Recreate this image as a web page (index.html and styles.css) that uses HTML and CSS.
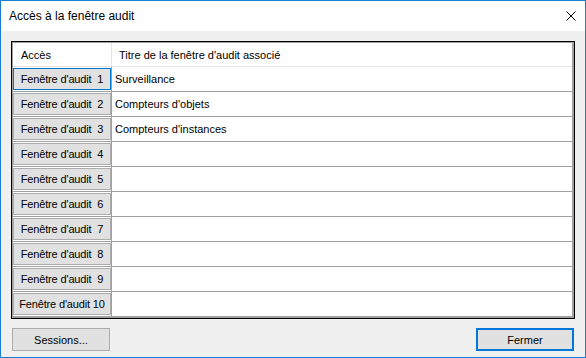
FILE: index.html
```html
<!DOCTYPE html>
<html>
<head>
	<title>Accès à la fenêtre audit</title>
	<link rel="stylesheet" href="styles.css">
</head>
<body>
	<div class="window">
		<div class="titlebar">
			<span class="title">Accès à la fenêtre audit</span>
			<svg class="close" width="10" height="10" viewBox="0 0 10 10">
				<path d="M0.5 0.5 L9.5 9.5 M9.5 0.5 L0.5 9.5" stroke="#000" stroke-width="1" fill="none"/>
			</svg>
		</div>
		<div class="content">
			<div class="grid">
				<div class="grid-inner">
					<div class="row header">
						<div class="col-access">Accès</div>
						<div class="col-title">Titre de la fenêtre d'audit associé</div>
					</div>
					<div class="row">
						<div class="col-access"><button class="cell-btn focused">Fenêtre d'audit&nbsp;&nbsp;1</button></div>
						<div class="col-title">Surveillance</div>
					</div>
					<div class="row">
						<div class="col-access"><button class="cell-btn">Fenêtre d'audit&nbsp;&nbsp;2</button></div>
						<div class="col-title">Compteurs d'objets</div>
					</div>
					<div class="row">
						<div class="col-access"><button class="cell-btn">Fenêtre d'audit&nbsp;&nbsp;3</button></div>
						<div class="col-title">Compteurs d'instances</div>
					</div>
					<div class="row">
						<div class="col-access"><button class="cell-btn">Fenêtre d'audit&nbsp;&nbsp;4</button></div>
						<div class="col-title"></div>
					</div>
					<div class="row">
						<div class="col-access"><button class="cell-btn">Fenêtre d'audit&nbsp;&nbsp;5</button></div>
						<div class="col-title"></div>
					</div>
					<div class="row">
						<div class="col-access"><button class="cell-btn">Fenêtre d'audit&nbsp;&nbsp;6</button></div>
						<div class="col-title"></div>
					</div>
					<div class="row">
						<div class="col-access"><button class="cell-btn">Fenêtre d'audit&nbsp;&nbsp;7</button></div>
						<div class="col-title"></div>
					</div>
					<div class="row">
						<div class="col-access"><button class="cell-btn">Fenêtre d'audit&nbsp;&nbsp;8</button></div>
						<div class="col-title"></div>
					</div>
					<div class="row">
						<div class="col-access"><button class="cell-btn">Fenêtre d'audit&nbsp;&nbsp;9</button></div>
						<div class="col-title"></div>
					</div>
					<div class="row">
						<div class="col-access"><button class="cell-btn">Fenêtre d'audit 10</button></div>
						<div class="col-title"></div>
					</div>
				</div>
			</div>
			<div class="footer">
				<button class="btn">Sessions...</button>
				<button class="btn default">Fermer</button>
			</div>
		</div>
	</div>
</body>
</html>
```

FILE: styles.css
```css
body {
	margin: 0;
	font-family: "Liberation Sans", Arial, sans-serif;
	font-size: 11px;
	color: #000;
}

.window {
	width: 586px;
	height: 358px;
	box-sizing: border-box;
	border: 1px solid #1a7fd4;
	background: #f0f0f0;
	display: flex;
	flex-direction: column;
}

.titlebar {
	height: 30px;
	background: #fff;
	display: flex;
	align-items: center;
	justify-content: space-between;
	padding: 0 9px 0 8px;
}

.title {
	font-size: 12px;
}

.close {
	margin-bottom: 1px;
}

.content {
	padding: 10px 10px 0 10px;
}

.grid {
	height: 278px;
	box-sizing: border-box;
	border: 1px solid #000;
}

.grid-inner {
	height: 100%;
	box-sizing: border-box;
	border: 1px solid #a0a0a0;
	border-right-width: 2px;
	background: #fff;
}

.row {
	display: flex;
	height: 25px;
	box-sizing: border-box;
	border-bottom: 1px solid #a0a0a0;
}

.row.header {
	height: 24px;
	border-bottom: 1px solid #e5e5e5;
}

.col-access {
	width: 99px;
	flex: none;
	box-sizing: border-box;
	border-right: 1px solid #a0a0a0;
	padding: 1px 0 1px 0;
	display: flex;
}

.col-title {
	flex: 1;
	display: flex;
	align-items: center;
	padding-left: 3px;
}

.header .col-access {
	border-right: 1px solid #e5e5e5;
	align-items: center;
	padding-left: 8px;
}

.header .col-title {
	padding-left: 7px;
}

.cell-btn {
	flex: 1;
	margin: 0;
	padding: 0;
	font-family: "Liberation Sans", Arial, sans-serif;
	font-size: 11px;
	letter-spacing: -0.15px;
	color: #000;
	background: #e1e1e1;
	border: 1px solid #adadad;
	white-space: pre;
}

.cell-btn.focused {
	border-color: #0078d7;
}

.footer {
	display: flex;
	justify-content: space-between;
	margin-top: 9px;
	padding-left: 1px;
	padding-right: 1px;
}

.btn {
	width: 98px;
	height: 23px;
	margin: 0;
	padding: 0;
	font-family: "Liberation Sans", Arial, sans-serif;
	font-size: 11px;
	color: #000;
	background: #e1e1e1;
	border: 1px solid #adadad;
}

.btn.default {
	border: 2px solid #0078d7;
}
```
